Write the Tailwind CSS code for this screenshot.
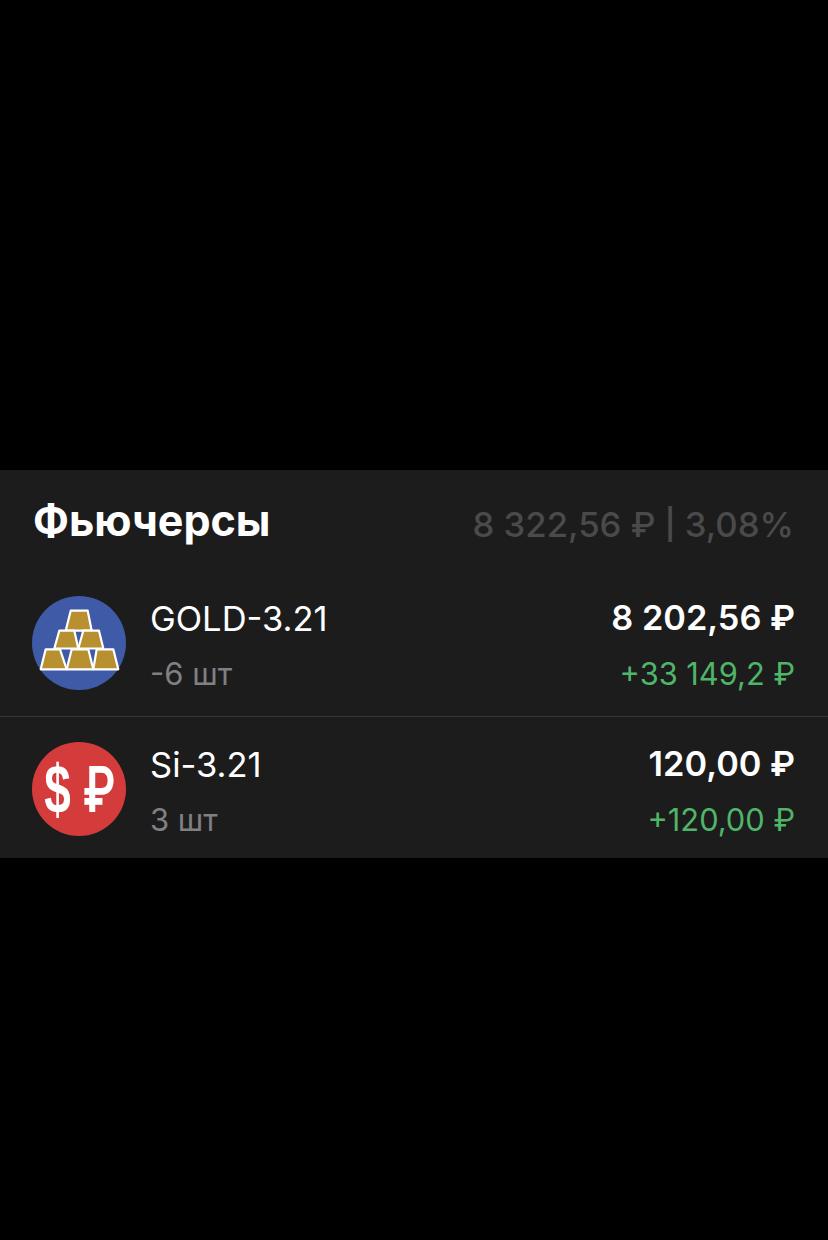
<!DOCTYPE html>
<html lang="ru">
<head>
<meta charset="utf-8">
<script src="https://cdn.jsdelivr.net/npm/@tailwindcss/browser@4"></script>
</head>
<body class="bg-black">
<div class="h-[1240px] w-[828px] overflow-hidden bg-black pt-[470px] font-['Inter','Noto_Sans',sans-serif]">
  <section class="h-[388px] bg-[#1c1c1c]">
    <header class="flex h-[100px] items-center justify-between pr-[34px] pl-[33px]">
      <h2 class="text-[43px] leading-none font-bold text-white">Фьючерсы</h2>
      <p class="mt-[8px] flex items-center text-[34.7px] leading-none font-medium text-[#4a4a4a]">8 322,56 ₽&nbsp;<span class="text-[30px] font-semibold">|</span>&nbsp;3,08%</p>
    </header>
    <div class="flex h-[147px] items-start border-b border-[#353535] pt-[26px] pr-[33px] pl-[32px]">
      <svg class="h-[94px] w-[94px] shrink-0" viewBox="0 0 94 94">
        <circle cx="47" cy="47" r="47" fill="#3f5aa6"/>
        <g fill="#b8902f" stroke="#fff" stroke-width="2.2" stroke-linejoin="round">
          <path d="M38.7 14.7H55.7L59.7 34.7H33.7Z"/>
          <path d="M27.3 34.7H42.3L46.3 52.5H22.3Z"/>
          <path d="M51.3 34.7H67L71.3 52.5H46.3Z"/>
          <path d="M13.7 53.3H28L34.7 73.3H8.7Z"/>
          <path d="M39.7 53.3H56.3L61.3 73.3H34.7Z"/>
          <path d="M64.7 53.3H81.3L86.3 73.3H61.3Z"/>
        </g>
      </svg>
      <div class="mt-[5px] ml-[24px] flex flex-col gap-[19px]">
        <div class="text-[34.5px] leading-[36px] text-white">GOLD-3.21</div>
        <div class="text-[31px] leading-[36px] text-[#808082]">-6 шт</div>
      </div>
      <div class="mt-[4px] ml-auto flex flex-col items-end gap-[20px]">
        <div class="text-[34.3px] leading-[36px] font-semibold text-white">8 202,56 ₽</div>
        <div class="text-[30.8px] leading-[36px] text-[#4fb568]">+33 149,2 ₽</div>
      </div>
    </div>
    <div class="flex h-[140px] items-start pt-[25px] pr-[33px] pl-[32px]">
      <div class="flex h-[94px] w-[94px] shrink-0 items-center justify-center gap-[14px] rounded-full bg-[#d43c3c] text-white">
        <span class="flex w-[25px] scale-x-[.7] justify-center font-['Liberation_Sans'] text-[68px] leading-none font-bold">$</span>
        <span class="flex w-[30px] scale-x-[.72] justify-center text-[63px] leading-none font-semibold">₽</span>
      </div>
      <div class="mt-[5px] ml-[24px] flex flex-col gap-[19px]">
        <div class="text-[34.5px] leading-[36px] text-white">Si-3.21</div>
        <div class="text-[31px] leading-[36px] text-[#808082]">3 шт</div>
      </div>
      <div class="mt-[4px] ml-auto flex flex-col items-end gap-[20px]">
        <div class="text-[34.3px] leading-[36px] font-semibold text-white">120,00 ₽</div>
        <div class="text-[30.8px] leading-[36px] text-[#4fb568]">+120,00 ₽</div>
      </div>
    </div>
  </section>
</div>
</body>
</html>
